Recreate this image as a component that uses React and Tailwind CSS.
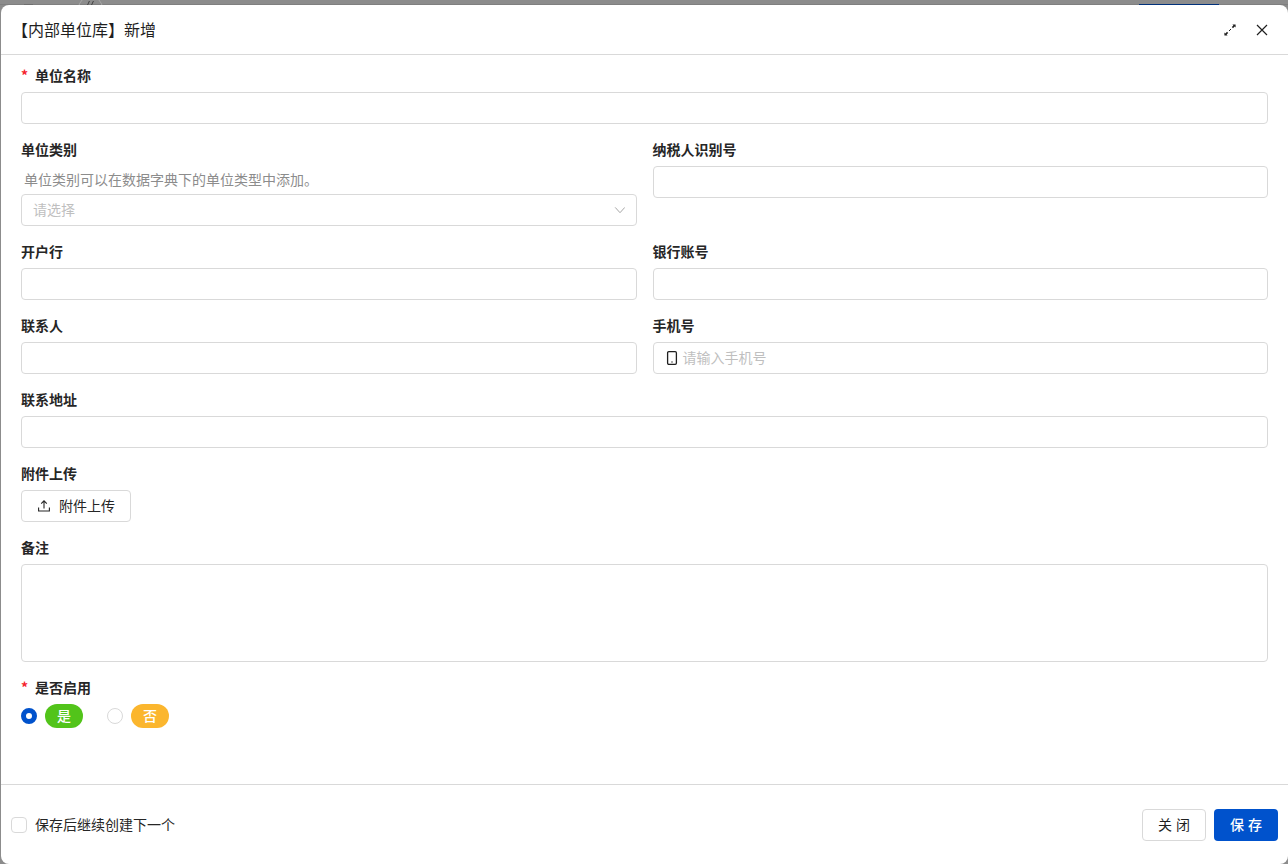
const font = { fontFamily: '"Noto Sans CJK SC", "Noto Sans", sans-serif' };

function Label({ children, required }) {
  return (
    <div className="flex h-[22px] items-center pb-[2px] text-sm leading-5 font-semibold text-[#262626]">
      {required && <span className="w-[14px] text-sm leading-5 font-bold text-[#f5222d]">*</span>}
      <span>{children}</span>
    </div>
  );
}

function Input({ className = "" }) {
  return <div className={`h-8 rounded-[4px] border border-[#d9d9d9] bg-white ${className}`} />;
}

function Field({ label, required, children }) {
  return (
    <div className="mb-[15px] min-w-0 flex-1">
      <Label required={required}>{label}</Label>
      <div className="mt-[5px]">{children || <Input />}</div>
    </div>
  );
}

function ExpandIcon() {
  return (
    <svg width="14" height="14" viewBox="0 0 14 14" fill="none" className="text-[#1f1f1f]">
      <path d="M6 8 8 6" stroke="currentColor" strokeWidth="1" />
      <path d="M12.6 1.4H9.4l1 1-1.6 1.6 1.2 1.2 1.6-1.6 1 1V1.4Z" fill="currentColor" />
      <path d="M1.4 12.6h3.2l-1-1 1.6-1.6L4 8.8l-1.6 1.6-1-1v3.2Z" fill="currentColor" />
    </svg>
  );
}

function CloseIcon() {
  return (
    <svg width="12" height="12" viewBox="0 0 12 12" fill="none" className="text-[#1f1f1f]">
      <path d="M1 1l10 10M11 1 1 11" stroke="currentColor" strokeWidth="1.2" />
    </svg>
  );
}

function Chevron() {
  return (
    <svg width="12" height="12" viewBox="0 0 12 12" fill="none" className="text-[#a6a6a6]">
      <path d="M2.2 3.4 7 8.7l4.8-5.3" stroke="currentColor" strokeWidth="1" />
    </svg>
  );
}

function Phone() {
  return (
    <svg width="14" height="14" viewBox="0 0 14 14" fill="none" className="text-[#1f1f1f]">
      <rect x="2.6" y="0.7" width="8.8" height="12.6" rx="1.2" stroke="currentColor" strokeWidth="1.3" />
      <rect x="6.4" y="10.4" width="1.2" height="1.2" fill="currentColor" />
    </svg>
  );
}

function Upload() {
  return (
    <svg width="14" height="14" viewBox="0 0 14 14" fill="none" className="text-[#262626]">
      <path d="M7 9.5V2M4.2 4.6 7 1.8l2.8 2.8" stroke="currentColor" strokeWidth="1.1" />
      <path d="M1.6 8.6v3.4h10.8V8.6" stroke="currentColor" strokeWidth="1.1" />
    </svg>
  );
}

export default function App() {
  return (
    <div className="relative flex h-[864px] w-[1288px] overflow-hidden bg-[#8c8c8c] pt-[5px] pl-[1px] text-sm" style={font}>
      <div className="absolute top-[4px] left-0 h-[1px] w-[1288px] bg-[#7f7f7f]" />
      <div className="absolute top-[4px] left-[1139px] h-[1px] w-[80px] bg-[#00307a]" />
      <div className="absolute top-[-4px] left-[78px] h-[25px] w-[25px] rounded-full border border-[#a6a6a6]" />
      <div className="absolute top-[1px] left-[88px] h-[4px] w-[5px] border-l border-r border-[#404040] skew-x-[-25deg]" />
      <div className="absolute top-[4px] left-[24px] h-[1px] w-[9px] bg-[#6e6e6e]" />

      <div className="relative flex min-w-0 flex-1 flex-col rounded-[8px] bg-white">
        <header className="flex h-[50px] flex-none items-center justify-between border-b border-[#d9d9d9] pr-5 pl-[11px]">
          <h1 className="pb-[2px] text-base leading-6 font-normal text-[#1f1f1f]">【内部单位库】新增</h1>
          <div className="flex items-center gap-[19px]">
            <ExpandIcon />
            <CloseIcon />
          </div>
        </header>

        <main className="min-h-0 flex-1 px-5 pt-[10px]">
          <Field label="单位名称" required />

          <div className="flex gap-4">
            <Field label="单位类别">
              <div className="h-7 pb-[2px] pl-[3px] text-sm leading-[26px] text-[#8c8c8c]">单位类别可以在数据字典下的单位类型中添加。</div>
              <div className="flex h-8 items-center justify-between rounded-[4px] border border-[#d9d9d9] px-[11px] text-sm text-[#bfbfbf]">
                <span className="pb-[2px]">请选择</span>
                <Chevron />
              </div>
            </Field>
            <Field label="纳税人识别号" />
          </div>

          <div className="flex gap-4">
            <Field label="开户行" />
            <Field label="银行账号" />
          </div>

          <div className="flex gap-4">
            <Field label="联系人" />
            <Field label="手机号">
              <div className="flex h-8 items-center gap-1 rounded-[4px] border border-[#d9d9d9] pl-[11px] text-sm text-[#bfbfbf]">
                <Phone />
                <span className="pb-[2px]">请输入手机号</span>
              </div>
            </Field>
          </div>

          <Field label="联系地址" />

          <Field label="附件上传">
            <button className="flex h-8 w-[110px] items-center justify-center gap-2 rounded-[4px] border border-[#d9d9d9] bg-white text-sm text-[#262626]">
              <Upload />
              <span className="pb-[2px]">附件上传</span>
            </button>
          </Field>

          <Field label="备注">
            <Input className="h-[98px]" />
          </Field>

          <div>
            <Label required>是否启用</Label>
            <div className="mt-[5px] flex items-center">
              <span className="h-4 w-4 rounded-full border-[5px] border-[#0052cc] bg-white" />
              <span className="ml-2 h-6 w-[38px] rounded-full bg-[#52c41a] text-center text-sm leading-[22px] font-medium text-white">是</span>
              <span className="ml-6 h-4 w-4 rounded-full border border-[#d9d9d9] bg-white" />
              <span className="ml-2 h-6 w-[38px] rounded-full bg-[#fbb62e] text-center text-sm leading-[22px] font-medium text-white">否</span>
            </div>
          </div>
        </main>

        <footer className="flex h-[80px] flex-none items-center justify-between border-t border-[#d9d9d9] px-[10px]">
          <label className="flex items-center gap-2 text-sm text-[#262626]">
            <span className="h-4 w-4 rounded-[4px] border border-[#d9d9d9] bg-white" />
            <span className="pb-[2px]">保存后继续创建下一个</span>
          </label>
          <div className="flex items-center gap-2">
            <button className="h-8 w-16 rounded-[4px] border border-[#d9d9d9] bg-white pb-[2px] text-sm text-[#1f1f1f]">
              <span className="mr-[-4px] tracking-[4px]">关闭</span>
            </button>
            <button className="h-8 w-16 rounded-[4px] bg-[#0052cc] pb-[2px] text-sm font-medium text-white">
              <span className="mr-[-4px] tracking-[4px]">保存</span>
            </button>
          </div>
        </footer>
      </div>
    </div>
  );
}
